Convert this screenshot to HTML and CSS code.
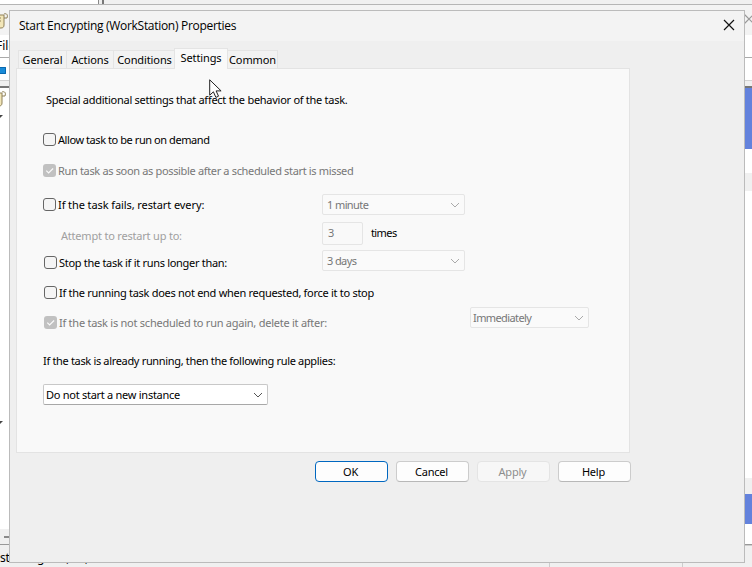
FILE: index.html
```
<!DOCTYPE html>
<html lang="en">
<head>
<meta charset="utf-8">
<title>Start Encrypting (WorkStation) Properties</title>
<link rel="stylesheet" href="styles.css">
</head>
<body>
<svg class="defs" width="0" height="0">
  <symbol id="scroll" viewBox="0 0 14 16"><path d="M1 2h9v10c0 2-1 3-3 3H1z" fill="#f2e6b8" stroke="#8f8058"/><path d="M10 1c3-1 4 1 3 4h-3M1 5h6M1 8h6M1 11h5" fill="none" stroke="#8f8058"/></symbol>
  <symbol id="chevron" viewBox="0 0 10 6"><path d="M1 1l4 4 4-4" fill="none" stroke="currentColor"/></symbol>
  <symbol id="tick" viewBox="0 0 13 13"><path d="M3.3 6.7l2.3 2.3 4.5-4.5" fill="none" stroke="#fafafa" stroke-width="1.2"/></symbol>
  <symbol id="cross" viewBox="0 0 12 12"><path d="M1 1l10 10M11 1L1 11" fill="none" stroke="currentColor" stroke-width="1.2"/></symbol>
</svg>
<div class="backdrop">
  <div class="strip"><i></i></div>
  <div class="caption"><svg class="scroll"><use href="#scroll"/></svg><svg class="bg-close"><use href="#cross"/></svg></div>
  <div class="menubar">File</div>
  <div class="toolbar"><i></i></div>
  <div class="content">
    <div class="tree"><svg class="scroll low"><use href="#scroll"/></svg><b></b><b class="second"></b><div class="hscroll"></div></div>
    <div class="list"><i class="blue tall"></i><i class="white a"></i><i class="gray"></i><i class="white b"></i><i class="gray c"></i><i class="blue d"></i></div>
  </div>
  <div class="status"><span class="st-text">st</span><span class="st-mid">g&nbsp; &nbsp; &nbsp; &nbsp;, &nbsp; &nbsp; ,</span><span class="st-a"></span><span class="st-b"></span></div>
</div>

<div class="dialog">
  <header><h1>Start Encrypting (WorkStation) Properties</h1><svg class="close"><use href="#cross"/></svg></header>
  <nav><span class="tab t1">General</span><span class="tab t2">Actions</span><span class="tab t3">Conditions</span><span class="tab on">Settings</span><span class="tab t5">Common</span></nav>
  <main>
    <p class="intro"><span class="w-intro">Special additional settings that affect the behavior of the task.</span></p>
    <div class="row r1"><i class="box"></i><span class="w1">Allow task to be run on demand</span></div>
    <div class="row r2 off"><i class="box"><svg><use href="#tick"/></svg></i><span class="w2">Run task as soon as possible after a scheduled start is missed</span></div>
    <div class="row r3"><i class="box"></i><span class="w3">If the task fails, restart every:</span><div class="select off"><span class="wm">1 minute</span><svg><use href="#chevron"/></svg></div></div>
    <div class="row r4"><span class="attempt">Attempt to restart up to:</span><div class="num">3</div><span class="times">times</span></div>
    <div class="row r5"><i class="box"></i><span class="w5">Stop the task if it runs longer than:</span><div class="select off"><span class="wd">3 days</span><svg><use href="#chevron"/></svg></div></div>
    <div class="row r6"><i class="box"></i><span class="w6">If the running task does not end when requested, force it to stop</span></div>
    <div class="row r7 off"><i class="box"><svg><use href="#tick"/></svg></i><span class="w7">If the task is not scheduled to run again, delete it after:</span><div class="select off now"><span class="wi">Immediately</span><svg><use href="#chevron"/></svg></div></div>
    <p class="rule"><span class="w8">If the task is already running, then the following rule applies:</span></p>
    <div class="select live"><span class="w9">Do not start a new instance</span><svg><use href="#chevron"/></svg></div>
  </main>
  <footer><span class="btn primary">OK</span><span class="btn">Cancel</span><span class="btn dim">Apply</span><span class="btn">Help</span></footer>
</div>
<svg class="pointer" viewBox="0 0 13 20"><path d="M.7.8v15.4l3.7-3.4 2.5 5.6 2.6-1.2-2.4-5.3h5z" fill="#fff" stroke="#222"/></svg>
</body>
</html>
```
FILE: styles.css
```
* { box-sizing: border-box; }
body { margin: 0; width: 752px; height: 567px; overflow: hidden; position: relative; background: #f0f0f0; color: #000; font: 11px/14px "Noto Sans", "Open Sans", sans-serif; white-space: nowrap; }
i, b { display: block; flex: none; font-style: normal; }
svg { display: block; flex: none; }
.defs { position: absolute; }
h1, p { margin: 0; font-weight: normal; }

.backdrop { display: flex; flex-direction: column; height: 567px; }
.strip { height: 5px; border-bottom: 1px solid #b5b5b5; }
.strip i { width: 104px; height: 4px; background: #fff; border-right: 2px solid #777; box-shadow: inset -3px 0 #eee, inset -4px 0 #888; }
.caption { height: 30px; background: #f3f3f3; display: flex; justify-content: space-between; padding-top: 8px; }
.scroll { width: 14px; height: 16px; margin-left: -6px; }
.bg-close { width: 12px; height: 12px; margin: 0 -3px 0 0; color: #999; }
.menubar { height: 23px; background: #fff; border-bottom: 1px solid #aaa; font-size: 12px; line-height: 22px; text-indent: -4px; }
.toolbar { height: 30px; background: linear-gradient(#fff 22px, #d2d2d2 22px, #d2d2d2 23px, #f0f0f0 23px); border-bottom: 2px solid #777; padding-top: 9px; }
.toolbar i { width: 6px; height: 7px; background: #198bd8; border: 1px solid #0968af; border-left: 0; border-radius: 0 1px 1px 0; }
.content { height: 456px; display: flex; justify-content: space-between; }
.tree { width: 10px; background: #fff; border-bottom: 1px solid #7c828b; padding-top: 3px; }
.scroll.low { margin-left: -8px; }
.tree b { width: 3px; height: 3px; margin-top: 8px; background: #444; clip-path: polygon(0 0,100% 0,0 100%); }
.tree .second { margin-top: 303px; }
.tree .hscroll { height: 17px; margin-top: 105px; background: linear-gradient(#8a8a8a,#8a8a8a) 4px 7px/6px 2px no-repeat #f0f0f0; }
.list { width: 8px; background: #fff; }
.blue { background: #6382dc; }
.tall { height: 61px; }
.gray { height: 18px; background: #f0f0f0; }
.a { height: 24px; } .b { height: 287px; } .c { height: 16px; } .d { height: 30px; }
.status { height: 23px; background: #f0f0f0; border-top: 1px solid #999; display: grid; grid-template-columns: 37px 512px 133px 1fr; font-size: 12px; line-height: 26px; }
.st-text { letter-spacing: -.2px; }
.st-a, .st-b { border-left: 1px solid #cdcdcd; }
.st-b { background: linear-gradient(#cdcdcd,#cdcdcd) 0 0/100% 1px no-repeat; }

.dialog { position: absolute; left: 9px; top: 10px; width: 736px; height: 553px; border: 1px solid #bbb; background: #efefef; }
header { height: 30px; background: #f3f3f3; display: flex; justify-content: space-between; padding: 6px 9px 0; }
h1 { font: 12px/18px "Open Sans", sans-serif; letter-spacing: -.3px; }
.close { width: 12px; height: 12px; margin-top: 2px; color: #111; }
nav { display: flex; align-items: flex-end; height: 27px; padding-left: 8px; letter-spacing: -.1px; }
.tab { height: 18px; border: 1px solid #e4e4e4; border-bottom: 0; border-left-width: 0; background: #f2f2f2; line-height: 18px; text-align: center; }
.t1 { width: 49px; border-left-width: 1px; }
.t2 { width: 47px; } .t3 { width: 61px; border-right: 0; } .t5 { width: 50px; }
.tab.on { width: 54px; height: 21px; margin: 0 0 -1px -1px; border-left-width: 1px; background: #f9f9f9; z-index: 1; line-height: 18px; }
main { width: 614px; height: 385px; margin-left: 6px; border: 1px solid #e3e3e3; background: #f9f9f9; padding: 24px 0 0 26px; }
.intro { padding-left: 3px; height: 40px; }
.row { display: flex; align-items: flex-start; }
.box { width: 13px; height: 13px; border: 1px solid #666; border-radius: 3px; background: #f5f5f5; margin-right: 2px; }
.row.off { color: #777; }
.off .box { background: #c1c1c1; border: 0; }
.box svg { width: 13px; height: 13px; }
.r1 { height: 31px; } .r2 { height: 34px; }
.r3 { height: 30px; } .r4 { height: 28px; }
.r5 { height: 30px; padding-left: 1px; } .r6 { height: 30px; padding-left: 1px; } .r7 { height: 38px; padding-left: 1px; }
.select { display: flex; align-items: center; justify-content: space-between; width: 143px; height: 21px; padding: 0 4px 0 4px; border: 1px solid #e5e5e5; border-radius: 2px; background: #fafafa; }
.select svg { width: 10px; height: 6px; color: #555; }
.select.off { color: #777; margin-left: auto; margin-right: 164px; margin-top: -4px; }
.select.off svg { color: #aaa; }
.r5 .select { margin-top: -6px; }
.select.now { width: 119px; margin-right: 40px; margin-top: -9px; padding-left: 2px; }
.select.live { width: 225px; background: #fff; border-color: #c8c8c8; border-bottom-color: #a8a8a8; padding-left: 2px; }
.w-intro { letter-spacing: -.27px; }
.w1 { letter-spacing: -.43px; }
.w2 { letter-spacing: -.34px; }
.w3 { letter-spacing: -.09px; }
.w5 { letter-spacing: -.3px; }
.w6 { letter-spacing: -.29px; }
.w7 { letter-spacing: -.25px; }
.w8 { letter-spacing: -.33px; }
.w9 { letter-spacing: -.27px; }
.wm, .wd, .wi { letter-spacing: -.6px; }
.attempt { color: #a0a0a0; padding-left: 18px; width: 279px; margin-top: 1px; letter-spacing: -.2px; }
.num { width: 41px; height: 23px; border: 1px solid #e5e5e5; border-radius: 2px; padding: 3px 5px; color: #777; margin-top: -6px; }
.times { margin: -2px 0 0 8px; letter-spacing: -.6px; }
.rule { height: 30px; }
footer { display: flex; gap: 8px; margin: 8px 0 0 305px; }
.btn { width: 73px; height: 21px; border: 1px solid #ccc; border-bottom-color: #b8b8b8; border-radius: 4px; background: #fdfdfd; line-height: 19px; text-align: center; letter-spacing: -.2px; padding-right: 2px; }
.primary { border-color: #0067c0; }
.dim { color: #8d8d8d; border-color: #e4e4e4; background: #f7f7f7; }
.pointer { position: absolute; left: 209px; top: 79px; width: 13px; height: 20px; }
```
